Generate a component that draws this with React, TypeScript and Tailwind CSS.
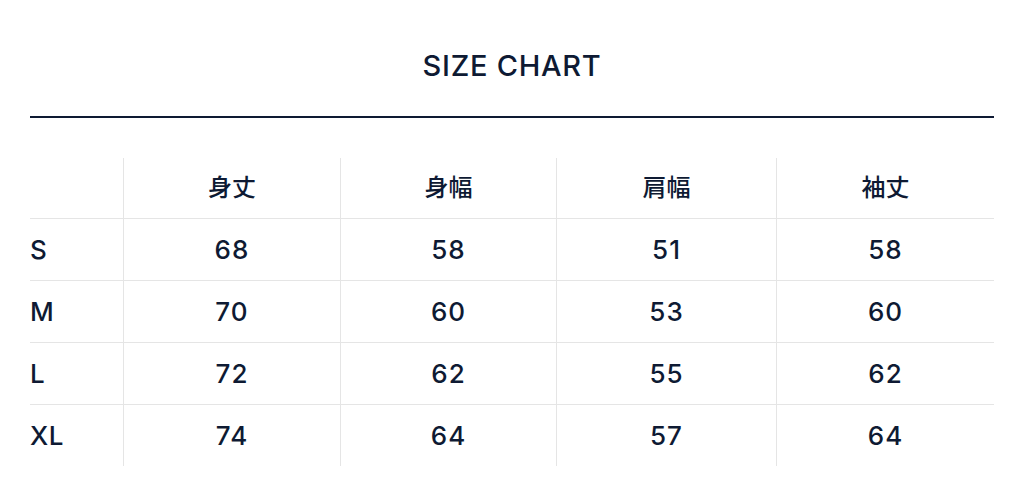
const columns = ["身丈", "身幅", "肩幅", "袖丈"];

const rows = [
  { size: "S", values: [68, 58, 51, 58] },
  { size: "M", values: [70, 60, 53, 60] },
  { size: "L", values: [72, 62, 55, 62] },
  { size: "XL", values: [74, 64, 57, 64] },
];

export default function App() {
  return (
    <div
      className="min-h-screen bg-white text-[#0e1a33] pl-[30px] pr-[40px] pt-[48px]"
      style={{ fontFamily: '"Inter", "Noto Sans CJK JP", sans-serif' }}
    >
      <h1 className="text-center text-[29px] leading-[36px] tracking-[0.025em] font-medium">
        SIZE CHART
      </h1>
      <div className="mt-[32px] h-[2px] bg-[#0e1a33]" />

      <div className="mt-[40px] grid grid-cols-[93px_217px_216px_220px_218px]">
        <div className="h-[61px] border-b border-[#e5e5e5]" />
        {columns.map((c) => (
          <div
            key={c}
            className="h-[61px] border-b border-l border-[#e5e5e5] flex items-center justify-center text-[24px] font-medium pb-[1px]"
          >
            {c}
          </div>
        ))}
        {rows.map((r, i) => {
          const last = i === rows.length - 1;
          const cell = last ? "h-[61px]" : "h-[62px] border-b border-[#e5e5e5]";
          return [
            <div
              key={r.size}
              className={`${cell} flex items-center text-[26px] font-medium tracking-[0.02em]`}
            >
              {r.size}
            </div>,
            ...r.values.map((v, j) => (
              <div
                key={r.size + j}
                className={`${cell} border-l border-[#e5e5e5] flex items-center justify-center text-[26px] font-medium tracking-[0.04em]`}
              >
                {v}
              </div>
            )),
          ];
        })}
      </div>
    </div>
  );
}
